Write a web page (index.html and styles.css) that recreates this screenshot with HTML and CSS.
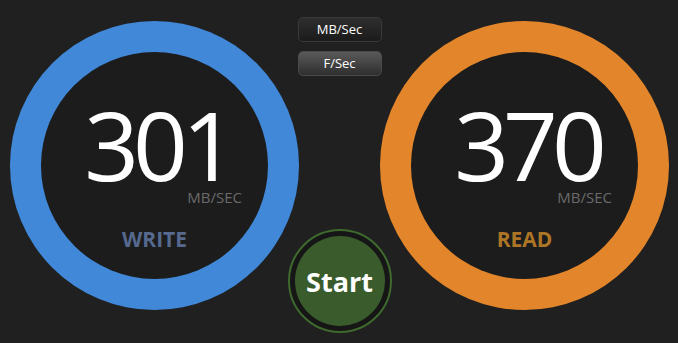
FILE: index.html
```html
<!DOCTYPE html>
<html lang="en">
<head>
<meta charset="UTF-8" />
<meta name="viewport" content="width=device-width, initial-scale=1" />
<title>Disk Speed</title>
<link rel="stylesheet" href="styles.css">
</head>
<body>

<div class="panel">

  <div class="gauge write">
    <div class="gauge-inner">
      <div class="value">301</div>
      <div class="unit">MB/SEC</div>
      <div class="label">WRITE</div>
    </div>
  </div>

  <div class="controls">
    <div class="toggles">
      <div class="toggle">MB/Sec</div>
      <div class="toggle active">F/Sec</div>
    </div>
    <div class="start-ring">
      <div class="start-btn">Start</div>
    </div>
  </div>

  <div class="gauge read">
    <div class="gauge-inner">
      <div class="value">370</div>
      <div class="unit">MB/SEC</div>
      <div class="label">READ</div>
    </div>
  </div>

</div>

</body>
</html>
```

FILE: styles.css
```css
* {
  box-sizing: border-box;
}
body, html {
  margin: 0; padding: 0;
  height: 100%;
  background: #202020;
  color: #fff;
  font-family: 'Open Sans', 'Noto Sans', sans-serif;
  overflow: hidden;
}
.panel {
  display: flex;
  align-items: flex-start;
  height: 343px;
  padding: 17px 9px 10px 10px;
}
.gauge {
  width: 289px;
  height: 289px;
  flex: none;
  margin-top: 4px;
  border-radius: 50%;
  padding: 31px;
}
.gauge.write {
  background: #4189d8;
}
.gauge.read {
  background: #e3862b;
}
.gauge-inner {
  width: 100%;
  height: 100%;
  border-radius: 50%;
  background: #1c1c1c;
  display: flex;
  flex-direction: column;
  align-items: center;
  padding-top: 46px;
}
.value {
  font-size: 96px;
  line-height: 92px;
  letter-spacing: -6px;
  margin-right: -6px;
}
.unit {
  align-self: flex-end;
  margin-right: 26px;
  font-size: 15px;
  line-height: 15px;
  color: #6a6a6a;
}
.label {
  font-size: 21px;
  line-height: 21px;
  font-weight: bold;
  margin-top: 24px;
}
.write .label {
  color: #56698f;
}
.read .label {
  color: #ad7526;
}
.controls {
  flex: none;
  width: 81px;
  height: 100%;
  display: flex;
  flex-direction: column;
  align-items: center;
  justify-content: space-between;
}
.toggles {
  display: flex;
  flex-direction: column;
  gap: 9px;
}
.toggle {
  width: 84px;
  height: 25px;
  border-radius: 5px;
  border: 1px solid #3a3a3a;
  background: linear-gradient(#2e2e2e, #1b1b1b);
  font-size: 13px;
  line-height: 23px;
  text-align: center;
}
.toggle.active {
  border-color: #4a4a4a;
  background: linear-gradient(#5a5a5a, #2e2e2e);
}
.start-ring {
  flex: none;
  width: 104px;
  height: 104px;
  border-radius: 50%;
  border: 2px solid #3e6a2e;
  background: #161616;
  padding: 5px;
}
.start-btn {
  width: 100%;
  height: 100%;
  border-radius: 50%;
  background: #3a5c2d;
  display: flex;
  align-items: center;
  justify-content: center;
  font-size: 27px;
  font-weight: bold;
}
```
